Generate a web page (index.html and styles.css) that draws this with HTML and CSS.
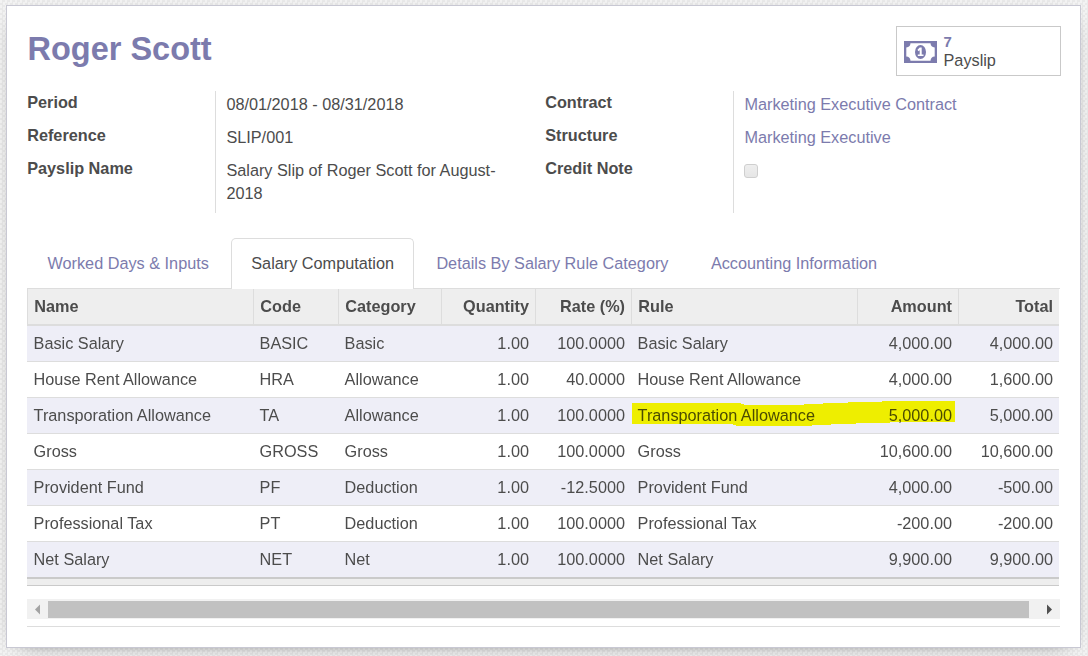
FILE: index.html
```html
<!DOCTYPE html>
<html lang="en">
<head>
<meta charset="utf-8">
<title>Payslip - Roger Scott</title>
<link rel="stylesheet" href="styles.css">
</head>
<body>
<main class="sheet">
  <header class="head">
    <h1>Roger Scott</h1>
    <div class="stat">
      <svg class="money" viewBox="0 0 33 22" width="33" height="22">
        <path fill="#7c7bad" fill-rule="evenodd" d="M0 0H33V22H0ZM6.500 2.300A4.500 4.500 0 0 1 2.300 6.500V15.500A4.500 4.500 0 0 1 6.500 19.700H26.500A4.500 4.500 0 0 1 30.700 15.500V6.500A4.500 4.500 0 0 1 26.500 2.300Z"/>
        <ellipse cx="16.500" cy="11" rx="5.500" ry="7" fill="#7c7bad"/>
        <path fill="#fff" d="M15.700 6.500H17.700V13.500H19.500V15H13.800V13.500H15.700V9.300L14.300 10.200L13.500 8.700Z"/>
      </svg>
      <div class="stat-text"><strong>7</strong><span>Payslip</span></div>
    </div>
  </header>

  <section class="info">
    <div class="labels"><b>Period</b><b>Reference</b><b>Payslip Name</b></div>
    <div class="values"><span>08/01/2018 - 08/31/2018</span><span>SLIP/001</span><span>Salary Slip of Roger Scott for August-2018</span></div>
    <div class="labels second"><b>Contract</b><b>Structure</b><b>Credit Note</b></div>
    <div class="values"><a>Marketing Executive Contract</a><a>Marketing Executive</a><i class="check"></i></div>
  </section>

  <nav class="tabs">
    <a>Worked Days &amp; Inputs</a>
    <a class="active">Salary Computation</a>
    <a>Details By Salary Rule Category</a>
    <a>Accounting Information</a>
  </nav>

  <div class="table-wrap">
    <table>
      <colgroup><col class="c-name"><col class="c-code"><col class="c-cat"><col class="c-qty"><col class="c-rate"><col class="c-rule"><col class="c-amt"><col class="c-total"></colgroup>
      <thead><tr><th>Name</th><th>Code</th><th>Category</th><th class="n">Quantity</th><th class="n">Rate (%)</th><th>Rule</th><th class="n">Amount</th><th class="n">Total</th></tr></thead>
      <tbody>
        <tr><td>Basic Salary</td><td>BASIC</td><td>Basic</td><td class="n">1.00</td><td class="n">100.0000</td><td>Basic Salary</td><td class="n">4,000.00</td><td class="n">4,000.00</td></tr>
        <tr><td>House Rent Allowance</td><td>HRA</td><td>Allowance</td><td class="n">1.00</td><td class="n">40.0000</td><td>House Rent Allowance</td><td class="n">4,000.00</td><td class="n">1,600.00</td></tr>
        <tr><td>Transporation Allowance</td><td>TA</td><td>Allowance</td><td class="n">1.00</td><td class="n">100.0000</td><td>Transporation Allowance</td><td class="n">5,000.00</td><td class="n">5,000.00</td></tr>
        <tr><td>Gross</td><td>GROSS</td><td>Gross</td><td class="n">1.00</td><td class="n">100.0000</td><td>Gross</td><td class="n">10,600.00</td><td class="n">10,600.00</td></tr>
        <tr><td>Provident Fund</td><td>PF</td><td>Deduction</td><td class="n">1.00</td><td class="n">-12.5000</td><td>Provident Fund</td><td class="n">4,000.00</td><td class="n">-500.00</td></tr>
        <tr><td>Professional Tax</td><td>PT</td><td>Deduction</td><td class="n">1.00</td><td class="n">100.0000</td><td>Professional Tax</td><td class="n">-200.00</td><td class="n">-200.00</td></tr>
        <tr><td>Net Salary</td><td>NET</td><td>Net</td><td class="n">1.00</td><td class="n">100.0000</td><td>Net Salary</td><td class="n">9,900.00</td><td class="n">9,900.00</td></tr>
      </tbody>
    </table>
    <div class="foot"></div>
    <svg class="marker" viewBox="0 0 323 25" width="323" height="25" shape-rendering="crispEdges">
      <path fill="#ffff00" d="M0 2H109V3H112V4H172V3H191V2H216V1H250V0H323V21H258V22H224V23H199V24H180V25H104V24H101V23H0Z"/>
    </svg>
  </div>

  <div class="scroll">
    <svg width="21" height="20" viewBox="0 0 21 20"><path fill="#a3a3a3" d="M8 10.500L13 5.500V15.500Z"/></svg>
    <div class="thumb"></div>
    <svg width="31" height="20" viewBox="0 0 31 20"><path fill="#505050" d="M23 10.500L18 5.500V15.500Z"/></svg>
  </div>
  <div class="rule"></div>
</main>
</body>
</html>
```
FILE: styles.css
```css
* { box-sizing: border-box; }
body {
  margin: 0;
  height: 656px;
  overflow: hidden;
  padding: 5px 7px 8px 6px;
  font: 16.25px/23px "Liberation Sans", Arial, sans-serif;
  color: #4c4c4c;
  background: repeating-conic-gradient(#e9e9e9 0 25%, #f3f3f3 0 50%) 0 0 / 5px 5px;
}
.sheet {
  height: 643px;
  padding: 20px;
  background: #fff;
  border: 1px solid #c8c8d3;
  box-shadow: 0 5px 20px -15px #000;
}
.head { display: flex; justify-content: space-between; height: 65px; }
h1 { margin: 4px 0 0; padding-left: .5px; font-size: 32.500px; line-height: 38px; color: #7c7bad; }
.stat { display: flex; width: 165px; height: 50px; margin-right: -1px; border: 1px solid #c9c9c9; padding: 0 7px; gap: 6.500px; }
.money { margin-top: 13.500px; }
.stat-text { display: flex; flex-direction: column; line-height: 18px; padding-top: 6px; }
.stat-text strong { color: #7c7bad; font-size: 15px; }
.info { display: grid; grid-template-columns: 188px 330px 188px 327px; height: 122px; }
.labels { display: flex; flex-direction: column; gap: 10px; padding-left: .2px; }
.values { display: flex; flex-direction: column; gap: 10px; padding: 2px 40px 0 10.400px; border-left: 1px solid #ddd; }
.info .labels:first-child + .values { padding-right: 45px; }
a { color: #7c7bad; }
.check { width: 14px; height: 14px; margin-top: 5px; margin-left: -.4px; border: 1px solid #cfcfcf; border-radius: 3px; background: linear-gradient(#eee, #e6e6e6); }
.tabs { display: flex; height: 51px; margin-top: 25px; border-bottom: 1px solid #ddd; }
.tabs a { padding: 13px 19.500px 0; margin-right: 1.400px; border: 1px solid transparent; border-bottom: 0; white-space: nowrap; }
.tabs .active { height: 51px; color: #4c4c4c; border-color: #ddd; background: #fff; border-radius: 5px 5px 0 0; }
.table-wrap { position: relative; width: 1032px; isolation: isolate; }
table { width: 1032px; table-layout: fixed; border-collapse: separate; border-spacing: 0; }
.c-name, .c-rule { width: 226px; }
.c-code { width: 85px; }
.c-cat { width: 103px; }
.c-qty { width: 94px; }
.c-rate { width: 96px; }
.c-amt, .c-total { width: 101px; }
th { height: 37px; padding: 0 6px 0 6.300px; text-align: left; background: #eee; border-left: 1px solid #ddd; border-bottom: 2px solid #ddd; }
td { height: 36px; padding: 0 6px 0 6.600px; border-bottom: 1px solid #ddd; white-space: nowrap; }
tbody tr:nth-child(odd) { background: #eeeef7; }
tbody tr:last-child td { border-bottom: 0; height: 35px; }
.n { text-align: right; }
.foot { height: 9px; background: #eee; border-top: 2px solid #cacaca; border-bottom: 1px solid #cacaca; }
.marker { position: absolute; left: 605px; top: 112px; mix-blend-mode: multiply; }
.scroll { display: flex; height: 20px; margin-top: 13px; background: #f1f1f1; }
.thumb { flex: 1; margin: 2px 0 1px; background: #c1c1c1; }
.rule { height: 8px; border-bottom: 1px solid #ddd; }
```
